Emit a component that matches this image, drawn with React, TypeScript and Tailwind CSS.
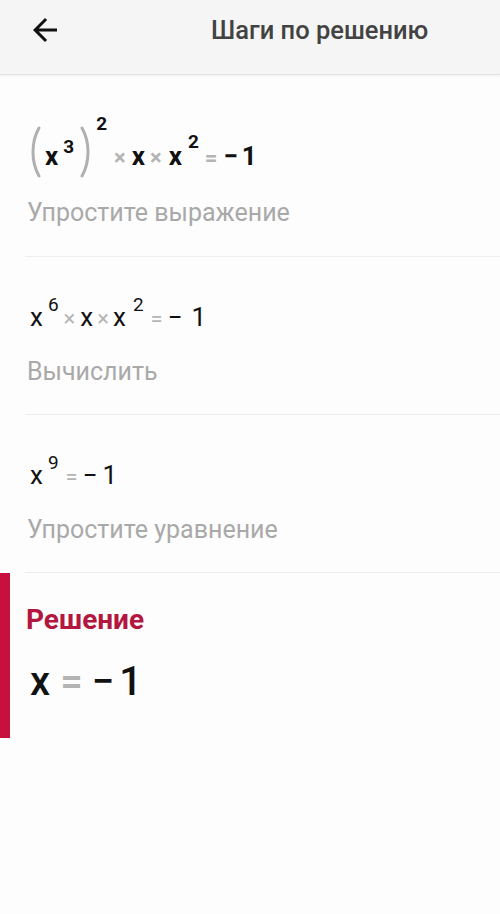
import React from 'react';

const ArrowBack = () => (
  <svg width="36" height="36" viewBox="0 0 24 24" fill="currentColor" xmlns="http://www.w3.org/2000/svg">
    <path d="M20 11H7.83l5.59-5.59L12 4l-8 8 8 8 1.41-1.41L7.83 13H20v-2z" />
  </svg>
);

const Paren: React.FC<{ flip?: boolean }> = ({ flip }) => (
  <svg width="12" height="52" viewBox="0 0 12 52" fill="none" className={flip ? 'relative top-[13px] -scale-x-100' : 'relative top-[13px]'}>
    <path d="M9 2 C1 16 1 36 9 50" stroke="#b0b0b0" strokeWidth="3" strokeLinecap="round" />
  </svg>
);

const Op: React.FC<{ children: React.ReactNode; className?: string }> = ({ children, className }) => (
  <span className={'text-[#b4b4b4] ' + (className ?? '')}>{children}</span>
);

const Step: React.FC<{ label: string; children: React.ReactNode; first?: boolean }> = ({ label, children, first }) => (
  <div className="ml-[25px] border-b border-[#ededed]">
    <div className={first ? 'h-[94px] flex items-end pl-[5px]' : 'h-[73px] flex items-end pl-[5px]'}>
      {children}
    </div>
    <p className={first ? 'mt-[29px] mb-[28px] pl-[2px] text-[25px] leading-[30px] text-[#a9a9a9]' : 'mt-[27px] mb-[27px] pl-[2px] text-[25px] leading-[30px] text-[#a9a9a9]'}>{label}</p>
  </div>
);

export default function App() {
  return (
    <div className="min-h-[914px] w-[500px] bg-[#fdfdfd] font-['Roboto',sans-serif]">
      {/* toolbar */}
      <div className="h-[75px] bg-[#f5f5f5] border-b border-[#e4e4e4] shadow-[0_1px_3px_rgba(0,0,0,0.06)] flex items-center">
        <button className="ml-[27px] mt-[-14px] text-[#111]">
          <ArrowBack />
        </button>
        <h1 className="ml-[148px] mt-[-14px] text-[25.5px] font-medium text-[#424242]">Шаги по решению</h1>
      </div>

      {/* step 1 */}
      <Step label="Упростите выражение" first>
        <div className="flex items-baseline text-[26px] leading-none font-bold text-[#111]">
          <Paren />
          <span className="ml-[3px]">x</span>
          <span className="ml-[5px] text-[19px] relative -top-[12px]">3</span>
          <span className="ml-[5px]"><Paren flip /></span>
          <span className="ml-[5px] text-[19px] relative -top-[35px]">2</span>
          <Op className="ml-[7px] text-[22px]">×</Op>
          <span className="ml-[6px]">x</span>
          <Op className="ml-[5px] text-[22px]">×</Op>
          <span className="ml-[7px]">x</span>
          <span className="ml-[6px] text-[19px] relative -top-[17px]">2</span>
          <Op className="ml-[6px] text-[22px]">=</Op>
          <span className="ml-[6px]">−</span>
          <span className="ml-[4px]">1</span>
        </div>
      </Step>

      {/* step 2 */}
      <Step label="Вычислить">
        <div className="flex items-baseline text-[26px] leading-none text-[#111]">
          <span>x</span>
          <span className="ml-[5px] text-[19px] relative -top-[15px]">6</span>
          <Op className="ml-[5px] text-[22px]">×</Op>
          <span className="ml-[5px]">x</span>
          <Op className="ml-[4px] text-[22px]">×</Op>
          <span className="ml-[4px]">x</span>
          <span className="ml-[7px] text-[19px] relative -top-[15px]">2</span>
          <Op className="ml-[7px] text-[22px]">=</Op>
          <span className="ml-[5px]">−</span>
          <span className="ml-[9px]">1</span>
        </div>
      </Step>

      {/* step 3 */}
      <Step label="Упростите уравнение">
        <div className="flex items-baseline text-[26px] leading-none text-[#111]">
          <span>x</span>
          <span className="ml-[5px] text-[19px] relative -top-[15px]">9</span>
          <Op className="ml-[7px] text-[22px]">=</Op>
          <span className="ml-[5px]">−</span>
          <span className="ml-[5px]">1</span>
        </div>
      </Step>

      {/* solution */}
      <div className="flex h-[165px]">
        <div className="w-[10px] bg-[#c8103e]" />
        <div className="pl-[16px] pt-[29px]">
          <p className="text-[28px] leading-[36px] font-bold text-[#b3173f]">Решение</p>
          <div className="mt-[24px] pl-[4px] flex items-baseline text-[40px] leading-none font-medium text-[#111]">
            <span>x</span>
            <Op className="ml-[10px]">=</Op>
            <span className="ml-[9px]">−</span>
            <span className="ml-[5px]">1</span>
          </div>
        </div>
      </div>
    </div>
  );
}
